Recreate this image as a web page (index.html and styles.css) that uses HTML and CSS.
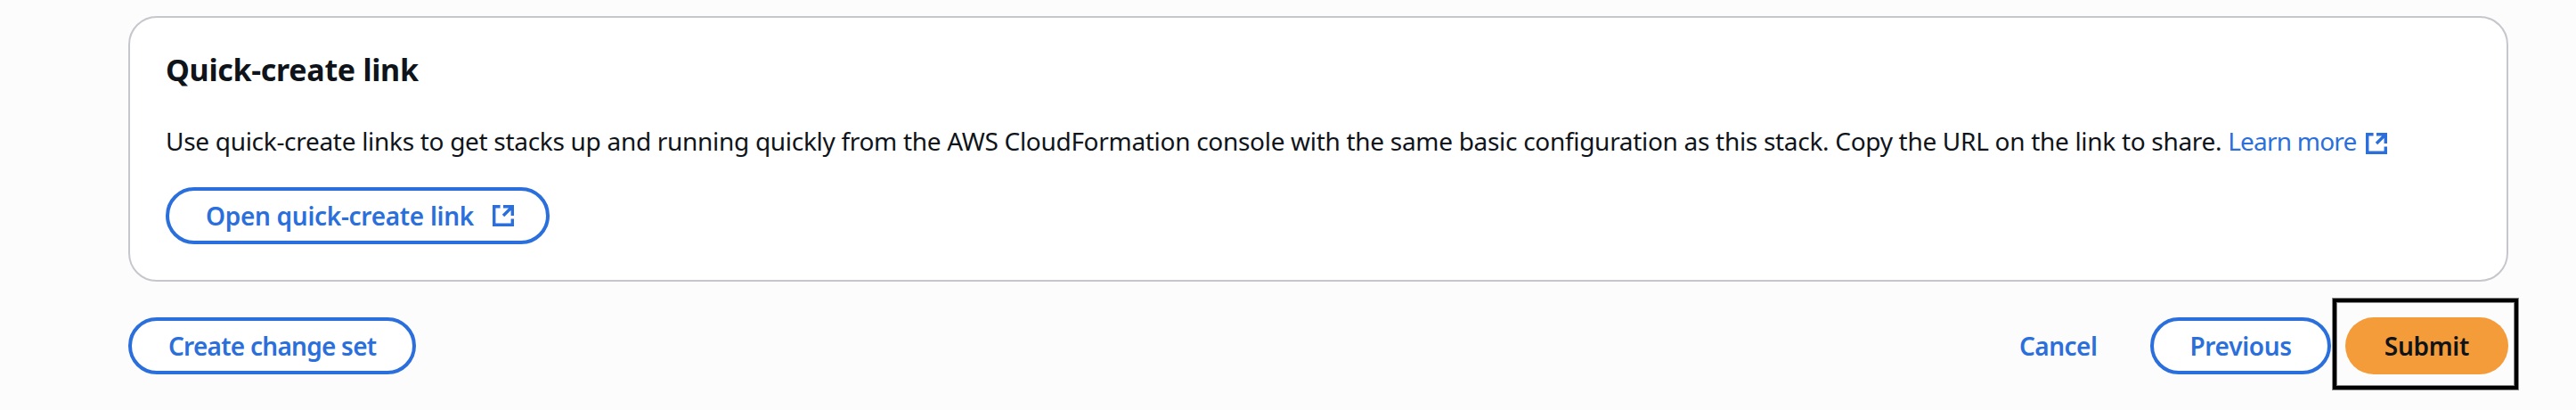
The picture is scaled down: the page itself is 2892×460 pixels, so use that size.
FILE: index.html
```html
<!DOCTYPE html>
<html lang="en">

<head>
    <meta charset="UTF-8">
    <title>Quick-create link</title>
    <link rel="stylesheet" href="styles.css">
</head>

<body>
    <div class="page">
        <div class="card">
            <h2 class="card-title">Quick-create link</h2>
            <p class="card-text">Use quick-create links to get stacks up and running quickly from the AWS CloudFormation console with the same basic configuration as this stack. Copy the URL on the link to share. <a class="link" href="#">Learn more<svg class="icon icon-link" viewBox="1 1 14 14"><path d="M14 8V2H8M14 2 8 8M6 2H2v12h12v-4"></path></svg></a></p>
            <a class="btn" href="#">Open quick-create link<svg class="icon" viewBox="1 1 14 14"><path d="M14 8V2H8M14 2 8 8M6 2H2v12h12v-4"></path></svg></a>
        </div>
        <div class="actions">
            <a class="btn btn-change" href="#">Create change set</a>
            <div class="actions-right">
                <a class="cancel" href="#">Cancel</a>
                <a class="btn btn-prev" href="#">Previous</a>
                <a class="btn-submit" href="#">Submit</a>
            </div>
        </div>
    </div>
</body>

</html>
```

FILE: styles.css
```css
body {
    margin: 0;
    background-color: #fcfcfd;
    color: #0f141a;
    font-family: "Noto Sans", sans-serif;
}

.page {
    box-sizing: border-box;
    min-height: 460px;
    padding: 18px 76px 0 144px;
}

.card {
    height: 298px;
    box-sizing: border-box;
    padding: 36px 40px 0;
    background-color: #fff;
    border: 2px solid #c6c6cd;
    border-radius: 32px;
}

.card-title {
    margin: 0;
    font-size: 34px;
    line-height: 44px;
    font-weight: 700;
    letter-spacing: -0.3px;
}

.card-text {
    margin: 38px 0 0;
    font-size: 28px;
    line-height: 40px;
    letter-spacing: -0.3px;
}

.link {
    color: #2a6fdb;
    letter-spacing: -0.8px;
    text-decoration: none;
}

.icon {
    width: 24px;
    height: 24px;
    margin-left: 21px;
    fill: none;
    stroke: #2a6fdb;
    stroke-width: 2;
    flex-shrink: 0;
}

.icon-link {
    vertical-align: -4px;
    margin-left: 11px;
}

.btn {
    display: inline-flex;
    align-items: center;
    height: 64px;
    box-sizing: border-box;
    padding: 0 41px;
    background-color: #fff;
    border: 4px solid #2a6fdb;
    border-radius: 32px;
    color: #2a6fdb;
    font-size: 28px;
    font-weight: 600;
    letter-spacing: -0.3px;
    text-decoration: none;
}

.card .btn {
    margin-top: 32px;
    padding-right: 36px;
}

.btn-change {
    letter-spacing: -0.75px;
}

.actions {
    display: flex;
    justify-content: space-between;
    align-items: center;
    margin-top: 40px;
}

.actions-right {
    display: flex;
    align-items: center;
}

.cancel {
    margin-right: 60px;
    color: #2a6fdb;
    font-size: 28px;
    font-weight: 600;
    letter-spacing: -0.5px;
    text-decoration: none;
}

.btn-prev {
    padding: 0 40px;
    margin-right: 16px;
}

.btn-submit {
    position: relative;
    display: flex;
    align-items: center;
    height: 64px;
    padding: 0 44px;
    background-color: #f49c3a;
    border-radius: 32px;
    color: #0f141a;
    font-size: 28px;
    font-weight: 600;
    letter-spacing: -0.3px;
    text-decoration: none;
}

/* highlight box drawn over the submit button */
.btn-submit::after {
    content: "";
    position: absolute;
    top: -21px;
    right: -11px;
    bottom: -17px;
    left: -14px;
    border: 4px solid #000;
    box-shadow: 0 0 0 1px #888, inset 0 0 0 1px #888;
}
```
